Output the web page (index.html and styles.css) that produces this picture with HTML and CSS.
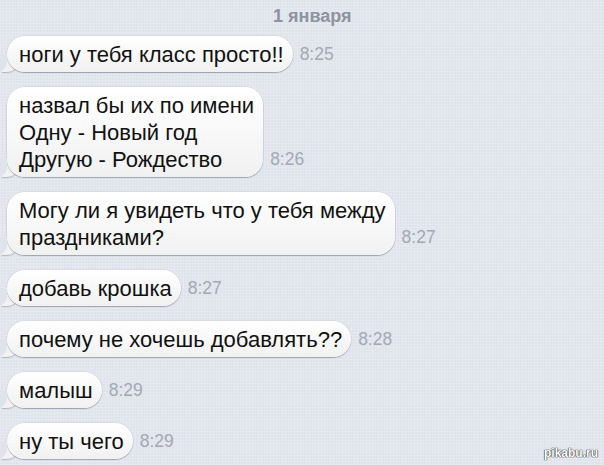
FILE: index.html
```html
<!DOCTYPE html>
<html lang="ru">
<head>
    <meta charset="UTF-8">
    <title>Сообщения</title>
    <link rel="stylesheet" href="styles.css">
</head>
<body>
    <div class="chat">
        <div class="date">1 января</div>

        <div class="row">
            <div class="bubble">ноги у тебя класс просто!!</div>
            <span class="time">8:25</span>
        </div>
        <div class="row">
            <div class="bubble">назвал бы их по имени<br>Одну - Новый год<br>Другую - Рождество</div>
            <span class="time">8:26</span>
        </div>
        <div class="row">
            <div class="bubble">Могу ли я увидеть что у тебя между<br>праздниками?</div>
            <span class="time">8:27</span>
        </div>
        <div class="row">
            <div class="bubble">добавь крошка</div>
            <span class="time">8:27</span>
        </div>
        <div class="row">
            <div class="bubble">почему не хочешь добавлять??</div>
            <span class="time">8:28</span>
        </div>
        <div class="row">
            <div class="bubble">малыш</div>
            <span class="time">8:29</span>
        </div>
        <div class="row">
            <div class="bubble">ну ты чего</div>
            <span class="time">8:29</span>
        </div>
    </div>
    <div class="mark">pikabu.ru</div>
</body>
</html>
```

FILE: styles.css
```css
body {
    margin: 0;
    height: 465px;
    overflow: hidden;
    font-family: "Liberation Sans", Arial, sans-serif;
    background-color: #dfe3eb;
    background-image:
        repeating-linear-gradient(0deg, rgba(255,255,255,0.18) 0 1px, transparent 1px 3px),
        repeating-linear-gradient(90deg, rgba(255,255,255,0.15) 0 1px, transparent 1px 3px);
}
.chat {
    display: flex;
    flex-direction: column;
    gap: 15px;
    padding: 6px 0 0 7px;
}
.date {
    align-self: flex-start;
    margin-left: 266px;
    margin-bottom: -5px;
    font-size: 18px;
    font-weight: bold;
    color: #8d939f;
    line-height: 20px;
}
.row {
    display: flex;
    align-items: flex-end;
    gap: 7px;
}
.bubble {
    position: relative;
    padding: 5px 9px 4px 12px;
    font-size: 22px;
    line-height: 27px;
    color: #111;
    background: linear-gradient(#ffffff, #f1f1f1);
    border-radius: 18px;
    box-shadow: 0 1px 1px rgba(90, 100, 120, 0.45), 0 0 0 0.5px rgba(120, 128, 140, 0.25);
}
.bubble::before {
    content: "";
    position: absolute;
    left: -5px;
    bottom: 0;
    width: 18px;
    height: 16px;
    background: #f2f2f2;
    border-bottom-right-radius: 14px 12px;
    box-shadow: 0 1px 1px rgba(90, 100, 120, 0.35);
    z-index: -1;
}
.bubble::after {
    content: "";
    position: absolute;
    left: -11px;
    bottom: 1px;
    width: 11px;
    height: 17px;
    background: #dfe3eb;
    border-bottom-right-radius: 9px 8px;
}
.time {
    font-size: 17.5px;
    line-height: 20px;
    padding-bottom: 8px;
    color: #a4a9b3;
}
.mark {
    position: absolute;
    right: 6px;
    bottom: 5px;
    font-size: 12px;
    font-weight: bold;
    color: #fff;
    text-shadow: 0 0 1px #333, 0 0 1px #333, 0 0 1px #333;
}
```
